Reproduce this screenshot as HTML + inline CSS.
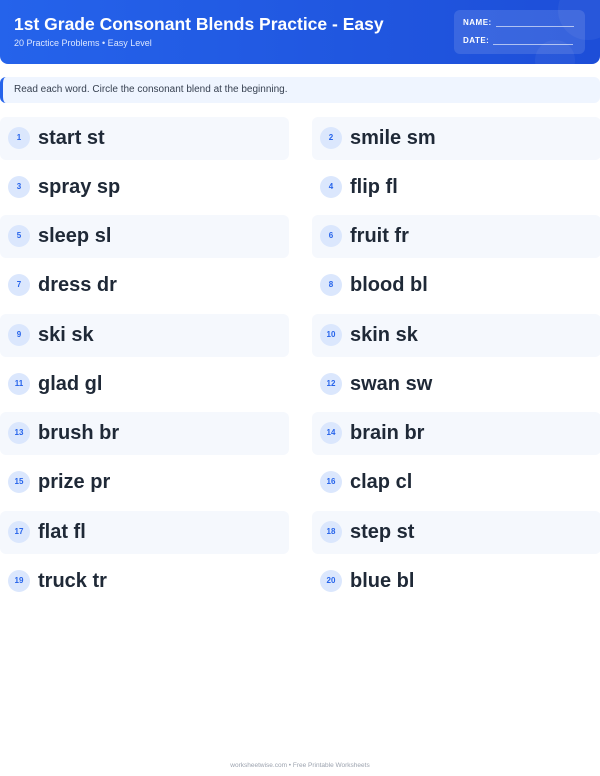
<!DOCTYPE html>
<html><head><style>
*{margin:0;padding:0;box-sizing:border-box}
body{width:600px;height:776px;background:#fff;font-family:"Liberation Sans",sans-serif;position:relative;overflow:hidden}
.hdr{position:absolute;left:0;top:0;width:600px;height:64px;border-radius:0 0 8px 8px;background:linear-gradient(90deg,#2563eb,#1d4ed8);overflow:hidden}
.hdr h1{position:absolute;left:14px;top:14px;color:#fff;font-size:17.5px;font-weight:bold}
.hdr .sub{position:absolute;left:14px;top:38px;color:#dbe6ff;font-size:9px}
.nb{position:absolute;left:454px;top:10px;width:131px;height:44px;background:rgba(255,255,255,.12);border-radius:6px}
.nb div{position:absolute;left:9px;color:#fff;font-size:8px;font-weight:bold;letter-spacing:.5px}
.nb span{display:inline-block;border-bottom:1px solid rgba(255,255,255,.6);vertical-align:bottom;margin-left:4px}
.c1{position:absolute;left:558px;top:-20px;width:60px;height:60px;border-radius:50%;background:rgba(255,255,255,.05)}
.c2{position:absolute;left:535px;top:40px;width:40px;height:40px;border-radius:50%;background:rgba(255,255,255,.05)}
.ins{position:absolute;left:0;top:77px;width:600px;height:26px;background:#eff5ff;border-left:3px solid #2563eb;border-radius:6px;font-size:10px;color:#374151;padding:7px 0 0 11px}
.r{position:absolute;height:43px;width:289px;border-radius:6px}
.r.s{background:#f5f8fd}
.n{position:absolute;left:8px;top:10px;width:22px;height:22px;border-radius:50%;background:#dbe7fd;color:#2563eb;font-size:8px;font-weight:bold;text-align:center;line-height:22px}
.w{position:absolute;left:38px;top:10px;font-size:20px;font-weight:bold;color:#1f2937}
.ft{position:absolute;top:762px;width:600px;text-align:center;font-size:6.5px;color:#9ca3af}
</style></head><body>
<div class="hdr"><div class="c1"></div><div class="c2"></div><h1>1st Grade Consonant Blends Practice - Easy</h1><div class="sub">20 Practice Problems • Easy Level</div>
<div class="nb"><div style="top:8px">NAME:<span style="width:78px"></span></div><div style="top:26px">DATE:<span style="width:80px"></span></div></div></div>
<div class="ins">Read each word. Circle the consonant blend at the beginning.</div>
<div class="r s" style="left:0;top:117px"><div class="n">1</div><div class="w">start st</div></div>
<div class="r s" style="left:312px;top:117px"><div class="n">2</div><div class="w">smile sm</div></div>
<div class="r" style="left:0;top:166px"><div class="n">3</div><div class="w">spray sp</div></div>
<div class="r" style="left:312px;top:166px"><div class="n">4</div><div class="w">flip fl</div></div>
<div class="r s" style="left:0;top:215px"><div class="n">5</div><div class="w">sleep sl</div></div>
<div class="r s" style="left:312px;top:215px"><div class="n">6</div><div class="w">fruit fr</div></div>
<div class="r" style="left:0;top:264px"><div class="n">7</div><div class="w">dress dr</div></div>
<div class="r" style="left:312px;top:264px"><div class="n">8</div><div class="w">blood bl</div></div>
<div class="r s" style="left:0;top:314px"><div class="n">9</div><div class="w">ski sk</div></div>
<div class="r s" style="left:312px;top:314px"><div class="n">10</div><div class="w">skin sk</div></div>
<div class="r" style="left:0;top:363px"><div class="n">11</div><div class="w">glad gl</div></div>
<div class="r" style="left:312px;top:363px"><div class="n">12</div><div class="w">swan sw</div></div>
<div class="r s" style="left:0;top:412px"><div class="n">13</div><div class="w">brush br</div></div>
<div class="r s" style="left:312px;top:412px"><div class="n">14</div><div class="w">brain br</div></div>
<div class="r" style="left:0;top:461px"><div class="n">15</div><div class="w">prize pr</div></div>
<div class="r" style="left:312px;top:461px"><div class="n">16</div><div class="w">clap cl</div></div>
<div class="r s" style="left:0;top:511px"><div class="n">17</div><div class="w">flat fl</div></div>
<div class="r s" style="left:312px;top:511px"><div class="n">18</div><div class="w">step st</div></div>
<div class="r" style="left:0;top:560px"><div class="n">19</div><div class="w">truck tr</div></div>
<div class="r" style="left:312px;top:560px"><div class="n">20</div><div class="w">blue bl</div></div>
<div class="ft">worksheetwise.com • Free Printable Worksheets</div>
</body></html>
